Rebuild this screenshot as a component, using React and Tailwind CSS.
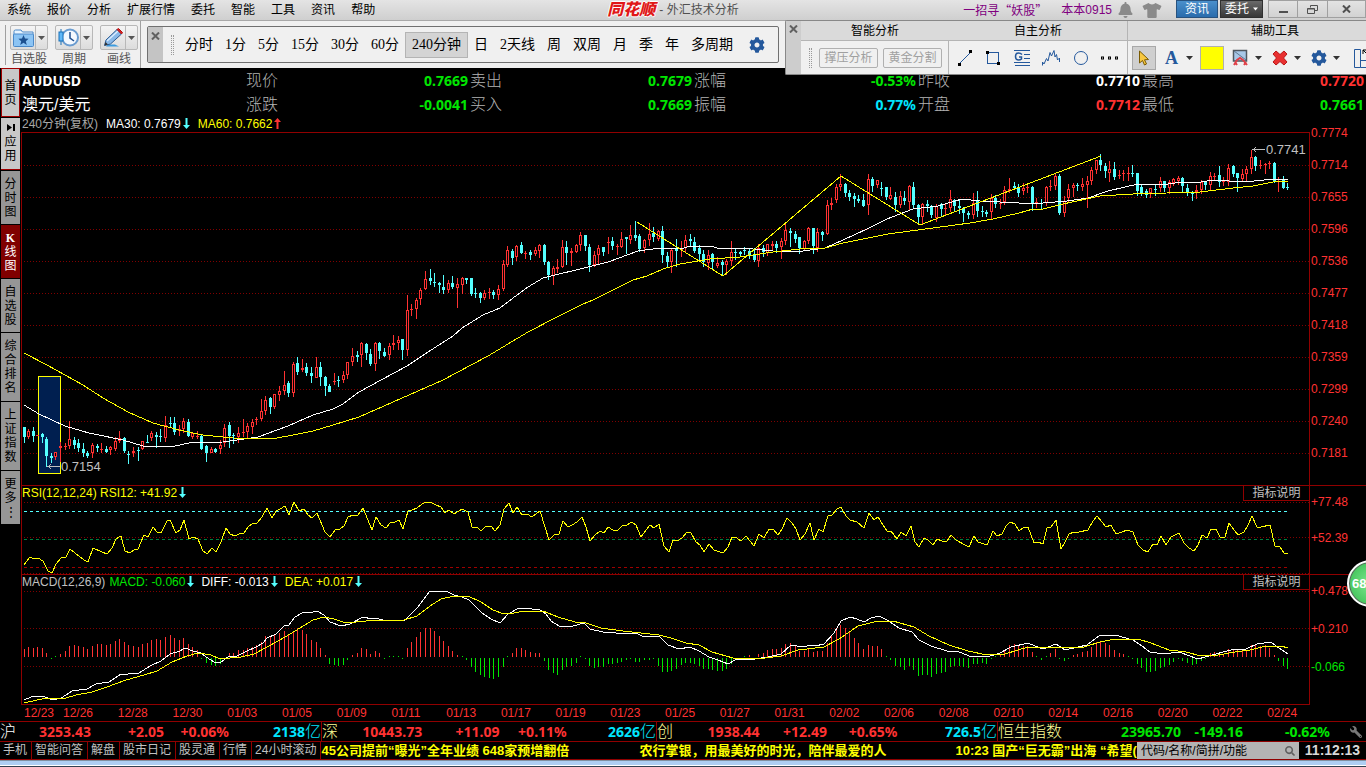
import { FaBell, FaCog, FaSearch, FaTshirt, FaWrench } from 'react-icons/fa';
import clsx from 'clsx';

const MENU = ['系统', '报价', '分析', '扩展行情', '委托', '智能', '工具', '资讯', '帮助'];

const PERIODS = ['分时', '1分', '5分', '15分', '30分', '60分', '240分钟', '日', '2天线', '周', '双周', '月', '季', '年', '多周期'];

const QUOTES = [
  [
    { label: '现价', value: '0.7669', color: 'text-[#00e600]' },
    { label: '卖出', value: '0.7679', color: 'text-[#00e600]' },
    { label: '涨幅', value: '-0.53%', color: 'text-[#00e600]' },
    { label: '昨收', value: '0.7710', color: 'text-white' },
    { label: '最高', value: '0.7720', color: 'text-[#ff3232]' },
  ],
  [
    { label: '涨跌', value: '-0.0041', color: 'text-[#00e600]' },
    { label: '买入', value: '0.7669', color: 'text-[#00e600]' },
    { label: '振幅', value: '0.77%', color: 'text-[#00e6ff]' },
    { label: '开盘', value: '0.7712', color: 'text-[#ff3232]' },
    { label: '最低', value: '0.7661', color: 'text-[#00e600]' },
  ],
];

const PRICES = ['0.7774', '0.7714', '0.7655', '0.7596', '0.7536', '0.7477', '0.7418', '0.7359', '0.7299', '0.7240', '0.7181'];
const GRID = [165, 197, 229, 261, 293, 325, 357, 389, 421, 453];

const DATES = [
  '12/26', '12/28', '12/30', '01/03', '01/05', '01/09', '01/11', '01/13', '01/17', '01/19', '01/23', '01/25',
  '01/27', '01/31', '02/02', '02/06', '02/08', '02/10', '02/14', '02/16', '02/20', '02/22', '02/24',
];

// [high, body top, body bottom, low, rising]
const CANDLES = [
  [427,427,437,443,0],[429,431,437,439,1],[427,431,436,442,0],[435,435,436,436,1],[433,434,437,443,0],[437,439,456,467,0],
  [453,456,458,463,0],[452,452,457,460,1],[442,446,448,462,1],[443,446,447,450,1],[421,439,446,449,1],[437,440,445,449,0],
  [439,443,448,452,0],[443,449,453,457,0],[451,453,456,458,0],[443,445,453,458,1],[444,446,448,452,0],[443,449,450,453,1],
  [446,449,452,453,0],[446,447,450,455,1],[437,441,449,451,1],[431,438,441,443,1],[437,438,451,453,0],[451,454,455,464,0],
  [447,451,453,457,1],[447,450,451,461,0],[441,441,449,450,1],[435,442,443,443,0],[431,433,438,441,1],[432,435,437,448,0],
  [429,436,437,442,0],[416,425,438,442,1],[417,423,424,428,0],[417,423,432,435,0],[425,429,431,436,1],[418,421,429,433,1],
  [419,422,436,437,0],[432,433,437,439,1],[431,436,437,439,1],[434,436,449,450,0],[445,446,453,462,0],[447,449,453,453,1],
  [448,449,452,453,0],[440,445,449,454,1],[424,428,443,447,1],[422,425,436,448,0],[433,435,436,444,0],[427,433,437,443,1],
  [419,432,433,437,1],[423,426,432,438,1],[419,422,427,434,1],[417,419,420,425,1],[399,411,419,421,1],[396,400,411,415,1],
  [397,398,407,414,0],[394,394,407,409,1],[386,391,395,401,1],[371,385,391,395,1],[381,383,393,397,0],[362,364,393,397,1],
  [357,363,372,375,0],[359,368,370,372,1],[363,367,373,376,0],[367,373,376,383,0],[357,367,378,378,1],[362,367,377,386,0],
  [376,377,386,396,0],[384,386,392,392,0],[373,381,382,385,1],[376,380,381,387,0],[371,375,380,383,1],[362,362,375,379,1],
  [348,356,362,366,1],[351,355,357,362,0],[342,343,355,367,1],[343,344,353,360,0],[349,354,364,366,0],[342,343,364,371,1],
  [342,343,351,359,0],[348,352,356,357,0],[343,346,355,360,1],[335,343,345,350,1],[336,340,343,350,1],[339,339,350,360,0],
  [295,310,350,356,1],[304,309,310,316,1],[298,300,309,319,1],[288,290,299,305,1],[271,279,289,290,1],[269,278,281,285,0],
  [273,282,283,287,0],[282,283,285,293,0],[275,287,290,294,0],[280,283,290,293,1],[276,283,287,289,0],[278,284,288,308,1],
  [277,278,285,294,1],[278,278,280,284,0],[278,278,294,296,0],[288,293,294,298,0],[292,293,298,303,0],[290,293,298,300,1],
  [288,292,293,299,1],[290,292,295,299,0],[285,289,295,300,1],[260,264,289,291,1],[246,250,265,267,1],[249,251,258,265,0],
  [245,246,257,261,1],[242,245,253,254,0],[251,253,254,259,1],[250,252,255,260,0],[247,250,254,256,1],[244,245,251,258,1],
  [244,245,262,265,0],[261,262,275,280,0],[266,268,276,285,1],[259,267,269,273,1],[240,247,267,268,1],[241,247,253,265,0],
  [248,251,253,266,1],[244,245,252,253,1],[232,235,245,251,1],[235,235,246,251,0],[244,247,265,272,0],[251,255,265,267,1],
  [245,248,255,264,1],[247,247,252,256,0],[237,242,243,254,1],[237,241,246,250,0],[244,246,247,255,1],[232,239,247,248,1],
  [237,237,239,254,0],[225,235,240,244,1],[221,235,238,241,0],[234,236,249,252,0],[239,240,248,253,1],[223,234,240,246,1],
  [227,233,237,242,0],[230,231,239,241,1],[226,231,255,263,0],[252,256,262,267,0],[249,250,262,273,1],[239,249,251,267,0],
  [241,249,250,257,1],[235,240,248,252,1],[234,239,241,246,0],[237,242,251,253,0],[245,248,254,260,0],[250,254,262,267,0],
  [250,255,263,270,1],[253,254,262,269,0],[257,263,266,268,1],[260,262,265,275,0],[259,261,265,275,1],[241,252,261,266,1],
  [248,252,253,260,0],[251,252,254,256,0],[247,250,251,255,0],[248,251,256,259,0],[248,254,260,262,0],[244,248,261,267,1],
  [245,248,252,257,0],[244,244,253,256,1],[241,244,246,251,1],[241,244,248,253,0],[238,241,247,259,1],[223,230,241,245,1],
  [228,231,233,247,0],[231,234,239,243,0],[237,237,248,254,0],[240,241,249,251,1],[227,228,241,244,1],[228,228,246,254,0],
  [228,232,248,252,1],[231,232,235,241,0],[200,205,234,235,1],[198,203,205,210,1],[184,187,200,203,1],[174,184,187,191,1],
  [183,184,193,197,0],[190,193,197,201,0],[193,196,199,207,0],[195,199,201,203,0],[194,200,206,207,0],[174,179,205,215,1],
  [177,179,186,192,0],[180,180,185,188,1],[182,188,189,196,0],[187,187,197,200,0],[187,195,199,200,1],[192,197,205,212,0],
  [191,196,205,208,1],[191,198,201,205,0],[185,186,202,211,1],[182,187,205,208,0],[204,205,217,224,0],[203,204,217,224,1],
  [200,204,206,212,0],[205,206,215,218,0],[204,206,218,222,1],[203,204,209,216,0],[203,208,209,215,1],[190,199,208,212,1],
  [199,200,206,212,0],[200,206,208,214,0],[207,208,213,222,0],[211,213,215,219,0],[193,203,215,219,1],[191,201,211,217,0],
  [206,211,212,217,0],[210,212,214,217,0],[194,198,212,219,1],[195,198,204,208,0],[199,203,204,209,1],[186,190,202,205,1],
  [178,189,191,193,1],[182,186,188,190,0],[184,188,193,197,0],[183,188,191,195,1],[183,187,188,193,1],[186,187,204,211,0],
  [198,202,203,208,1],[199,203,204,210,0],[186,187,203,206,1],[180,186,187,191,1],[174,176,186,190,1],[174,176,213,215,0],
  [196,201,213,217,1],[184,189,198,202,1],[183,185,188,197,1],[183,185,186,191,0],[178,184,187,191,1],[176,181,185,208,1],
  [167,170,181,185,1],[160,160,170,174,1],[154,160,165,171,0],[163,166,171,178,0],[161,169,173,182,1],[162,169,177,180,0],
  [170,175,176,179,1],[170,173,174,181,1],[167,173,174,181,1],[165,173,174,177,0],[173,173,191,196,0],[185,187,194,196,0],
  [189,191,195,198,0],[188,188,193,198,1],[184,189,190,196,0],[177,181,188,192,1],[181,181,188,192,0],[180,182,188,194,1],
  [178,179,183,186,1],[176,178,181,185,1],[177,178,186,193,0],[184,188,192,196,0],[191,192,194,201,0],[185,190,192,199,1],
  [180,182,190,194,1],[181,181,185,190,0],[172,176,185,190,1],[173,176,177,180,1],[166,175,182,187,0],[177,181,182,186,1],
  [164,168,182,186,1],[165,166,174,177,0],[173,173,178,192,0],[169,174,179,181,1],[166,169,174,181,1],[150,157,169,174,1],
  [156,157,166,171,0],[160,165,166,169,1],[163,164,165,174,1],[161,163,164,169,1],[162,163,181,183,0],[177,181,182,192,1],
  [176,180,188,189,0],[183,187,188,190,0],
];

const MA30 =
  '24,405 39,414 65,426 89,433 123,440 143,446 175,446 189,443 223,442 258,437 288,426 313,415 333,409 343,404 359,392 381,380 407,366 428,352 453,336 462,328 483,315 500,308 513,298 528,287 543,278 555,275 580,269 608,262 638,251 660,248 680,249 691,246 711,246 717,248 743,248 773,251 803,251 825,248 843,240 867,229 887,219 913,209 938,206 962,199 980,201 1019,203 1043,203 1067,201 1088,198 1108,191 1138,184 1168,184 1182,182 1195,183 1213,180 1245,182 1273,179 1288,180';

const MA60 =
  '24,353 47,365 83,385 103,398 128,412 153,423 179,430 203,435 233,438 271,439 288,436 313,431 333,425 359,417 443,380 488,356 528,332 557,317 583,304 593,300 617,288 633,280 647,276 663,269 680,264 710,259 740,257 773,252 800,249 825,248 843,243 888,234 918,230 970,223 993,219 1019,213 1033,209 1043,209 1063,204 1100,196 1133,194 1167,193 1200,192 1233,188 1253,186 1273,182 1288,181';

const RSI =
  '24,565 30,557 34,559 38,558 43,561 48,571 52,573 56,564 61,558 66,557 70,549 75,553 84,560 88,562 93,548 102,552 107,554 112,548 116,539 121,536 125,551 130,553 134,550 138,549 144,535 148,537 153,527 157,532 161,533 167,521 170,520 176,533 180,530 184,520 189,539 193,537 198,539 203,551 207,554 212,548 216,552 221,542 226,528 230,534 235,536 239,534 244,533 248,527 253,523 257,523 262,517 267,508 272,518 276,511 280,509 285,506 289,515 294,502 299,511 304,509 308,515 312,518 317,513 325,532 330,537 335,530 340,529 344,526 348,517 353,515 358,515 363,508 372,530 376,517 381,525 386,528 390,523 395,522 399,520 403,529 408,511 412,510 417,508 422,504 426,502 432,503 436,505 441,507 445,513 449,510 454,514 462,509 468,512 472,527 477,527 481,531 485,527 491,526 495,531 500,525 504,509 509,503 513,513 517,507 522,515 527,514 532,517 540,511 545,527 549,540 554,535 559,534 563,521 568,527 572,525 577,522 582,517 586,527 590,541 595,535 600,531 604,533 608,527 613,530 618,530 623,525 627,525 632,522 636,525 641,537 646,530 650,525 654,528 659,524 664,546 669,552 673,540 677,541 682,538 687,532 691,533 696,542 700,545 704,552 709,544 714,550 723,553 728,547 732,537 737,538 741,541 746,536 750,541 754,546 759,534 764,538 769,529 773,529 778,535 782,529 787,518 792,523 796,529 800,540 805,534 810,523 814,540 819,529 823,532 828,516 832,515 837,509 841,507 846,516 850,520 857,522 864,528 869,513 874,520 878,517 883,525 887,531 891,531 897,539 901,532 906,536 911,526 915,542 919,547 924,538 928,540 933,545 937,539 942,541 947,541 951,535 956,540 965,545 969,547 974,536 978,542 987,545 993,531 997,536 1002,534 1006,526 1010,522 1015,524 1019,531 1024,527 1028,527 1034,543 1038,542 1043,544 1047,528 1051,527 1056,520 1061,549 1065,542 1069,534 1074,532 1079,532 1088,530 1093,521 1097,516 1102,522 1106,527 1111,525 1116,534 1122,532 1127,530 1133,532 1138,545 1143,550 1148,552 1153,544 1157,545 1161,536 1166,545 1171,537 1175,535 1179,533 1184,543 1189,548 1194,551 1198,545 1202,535 1207,538 1211,529 1216,529 1220,537 1225,537 1229,523 1235,531 1238,535 1244,532 1248,525 1252,516 1257,527 1261,527 1270,525 1275,546 1280,547 1284,553 1288,554';

const DIFF =
  '24,700 31,697 43,696 52,700 61,698 66,695 72,691 87,689 96,684 109,682 121,674 128,674 139,673 150,666 161,661 170,654 180,651 185,648 193,651 201,653 209,659 216,663 221,662 228,657 237,656 245,652 256,647 263,643 267,638 276,634 284,626 289,625 295,617 304,612 313,612 317,611 324,615 330,622 341,626 350,624 363,617 372,619 376,618 386,621 399,620 404,621 417,608 430,591 446,591 454,595 462,597 469,600 482,613 491,619 500,623 508,614 519,608 532,609 540,610 546,614 551,621 559,626 573,626 584,623 590,629 603,632 616,633 636,633 642,636 659,636 668,645 679,649 690,647 699,651 709,657 718,660 728,664 735,660 755,659 768,657 781,654 791,645 803,647 811,645 815,646 824,644 834,633 841,621 850,617 857,619 864,622 871,618 879,616 887,620 899,628 912,632 919,640 931,646 947,651 957,651 969,656 987,657 1000,653 1011,647 1028,643 1035,646 1043,649 1056,644 1065,650 1087,645 1100,635 1115,635 1133,640 1142,646 1150,652 1164,654 1179,652 1198,659 1212,655 1231,650 1246,649 1257,644 1271,642 1279,648 1288,654';

const DEA =
  '24,703 46,698 66,698 76,695 92,692 107,687 126,680 144,675 157,671 172,662 187,656 198,653 211,655 220,659 241,657 254,654 269,646 285,637 300,628 313,620 324,617 334,619 343,622 356,622 376,620 404,620 417,616 430,606 441,599 454,596 468,596 481,602 493,610 504,614 514,613 525,611 543,611 558,617 575,622 586,623 601,628 623,631 659,635 671,638 686,643 699,645 712,652 733,658 765,658 781,656 798,650 824,647 839,639 858,626 878,621 893,621 914,627 929,636 949,645 968,651 987,655 1005,654 1028,647 1056,647 1084,647 1100,642 1115,639 1138,639 1151,643 1169,650 1186,652 1201,656 1218,655 1235,652 1250,650 1266,646 1281,646 1288,648';

const MACD_BARS = [
  8,10,9,10,9,4,-1,1,3,6,11,12,11,10,8,11,13,13,12,13,16,18,15,12,11,10,13,14,17,18,17,20,22,19,17,19,13,10,7,-1,
  -5,-7,-8,-6,-1,4,4,7,7,9,10,12,15,21,20,23,24,26,22,26,29,27,23,17,15,9,2,-6,-7,-8,-7,-2,2,4,9,8,3,6,4,-1,
  1,1,1,-1,9,15,20,25,29,29,26,21,16,11,6,2,1,-2,-9,-14,-17,-19,-20,-21,-19,-9,1,4,9,9,7,5,4,4,-3,-12,-15,-17,-12,-9,
  -8,-5,1,-1,-8,-10,-9,-9,-6,-6,-5,-4,-2,-1,-4,-4,-2,-2,-1,-8,-14,-14,-13,-11,-7,-5,-5,-6,-8,-11,-11,-12,-13,-13,-11,-6,-2,-1,1,2,
  -1,3,4,7,8,8,9,13,14,12,6,6,8,5,6,6,14,21,29,32,29,25,19,14,8,12,11,11,8,1,-2,-8,-9,-12,-8,-12,-18,-17,-17,-19,
  -16,-15,-14,-9,-8,-8,-9,-10,-6,-6,-5,-6,-1,1,3,6,12,13,12,11,11,5,1,-2,1,4,8,-1,-3,-1,2,3,5,6,10,15,15,14,12,7,
  4,3,1,-1,-6,-10,-14,-14,-13,-10,-9,-7,-4,-1,-3,-5,-7,-6,-3,-1,4,5,3,3,8,7,7,6,6,12,12,11,12,9,2,-3,-8,-11,
];

const SIDE = [
  { text: '首页', look: 'h-[49px] bg-[#c8c8c8] border border-[#a00000]' },
  { text: '应用', look: 'h-[52px] bg-[#c8c8c8] border-b border-[#a00000]', play: true },
  { text: '分时图', look: 'h-[53px] bg-[#969696]' },
  { text: 'K线图', look: 'h-[53px] bg-[#800000] text-white' },
  { text: '自选股', look: 'h-[53px] bg-[#969696]' },
  { text: '综合排名', look: 'h-[68px] bg-[#969696]' },
  { text: '上证指数', look: 'h-[68px] bg-[#969696]' },
  { text: '更多⋮', look: 'h-[53px] bg-[#969696]' },
];

const INDEXES = [
  { name: '沪', cols: 'grid-cols-[91fr_73fr_65fr_92fr]', nameColor: 'text-white', color: 'text-[#ff3232]', price: '3253.43', diff: '+2.05', pct: '+0.06%', vol: '2138' },
  { name: '深', cols: 'grid-cols-[100fr_77fr_67fr_89fr]', nameColor: 'text-[#ffff96]', color: 'text-[#ff3232]', price: '10443.73', diff: '+11.09', pct: '+0.11%', vol: '2626' },
  { name: '创', cols: 'grid-cols-[102fr_67fr_70fr_99fr]', nameColor: 'text-[#ffff96]', color: 'text-[#ff3232]', price: '1938.44', diff: '+12.49', pct: '+0.65%', vol: '726.5' },
  { name: '恒生指数', cols: 'grid-cols-[183fr_62fr_87fr_36fr]', nameColor: 'text-[#ffff96]', color: 'text-[#00e600]', price: '23965.70', diff: '-149.16', pct: '-0.62%' },
];

const LINKS = ['手机', '智能问答', '解盘', '股市日记', '股灵通', '行情', '24小时滚动'];

const barX = (i) => Math.floor(24 + i * 4.5625);

function Arrow({ up }) {
  return (
    <svg viewBox="0 0 7 11" className={clsx('inline-block w-[7px] h-[11px] ml-[2px] align-[-1px]', up ? 'text-[#ff3232]' : 'text-[#54ffff]')} fill="currentColor">
      <path d={up ? 'M3.5 0 L7 4 H4.5 V11 H2.5 V4 H0Z' : 'M3.5 11 L7 7 H4.5 V0 H2.5 V7 H0Z'} />
    </svg>
  );
}

function Caret({ className }) {
  return (
    <svg viewBox="0 0 7 4" className={clsx('h-1 shrink-0', className || 'w-[7px]')} fill="currentColor">
      <path d="M0 0H7L3.5 4Z" />
    </svg>
  );
}

function Cross({ className }) {
  return (
    <svg viewBox="0 0 9 8" className={className} stroke="currentColor" strokeWidth="2" fill="none">
      <path d="M1 0.5 L8 7.5 M8 0.5 L1 7.5" />
    </svg>
  );
}

function Handle() {
  return <span className="w-[3px] h-5 shrink-0 border-x border-dotted border-[#9a9a9a]" />;
}

function TitleBar() {
  return (
    <header className="h-[21px] shrink-0 grid grid-cols-[1fr_auto_1fr] border-b border-[#a8a8a8] bg-linear-to-b from-[#e4e4e4] to-[#cfcfcf] text-xs text-black">
      <nav className="flex items-center gap-4 pl-[7px] whitespace-nowrap">
        {MENU.map((m) => (
          <button key={m}>{m}</button>
        ))}
      </nav>
      <div className="flex items-center gap-1 pr-5 text-[#505050] whitespace-nowrap">
        <span className="text-base leading-5 font-black italic text-[#e01818] [text-shadow:1px_0_#fff,-1px_0_#fff,0_1px_#fff,0_-1px_#fff]">同花顺</span>
        <span>- 外汇技术分析</span>
      </div>
      <div className="flex items-center justify-end whitespace-nowrap">
        <a href="#tip" className="text-[#800080] mr-[14px] font-['Noto_Sans_CJK_SC',sans-serif]">一招寻“妖股”</a>
        <a href="#user" className="text-[#800080] mr-[6px]">本本0915</a>
        <FaBell className="w-[15px] h-4 text-[#8a8a8a] mr-[9px]" />
        <FaTshirt className="w-5 h-[15px] text-[#8a8a8a] mr-[14px]" />
        <button className="w-[42px] h-[18px] self-start border border-[#28527e] bg-linear-to-b from-[#4a90cc] to-[#2a6cac] text-white text-xs leading-4">资讯</button>
        <button className="w-[43px] h-[18px] ml-[2px] mr-[5px] self-start border border-[#303030] bg-linear-to-b from-[#6a6a6a] to-[#383838] text-white text-xs leading-4 flex items-center justify-center gap-1">
          委托
          <Caret className="w-[5px]" />
        </button>
        <button aria-label="最小化" className="w-[30px] h-[18px] self-start border border-[#a0a0a0] flex justify-center items-end pb-1">
          <span className="w-[9px] h-[2px] bg-[#505050]" />
        </button>
        <button aria-label="还原" className="w-[29px] h-[18px] self-start border-y border-[#a0a0a0] flex justify-center items-center">
          <svg viewBox="0 0 11 9" className="w-[11px] h-[9px]" fill="none" stroke="#505050">
            <path d="M3.5 2.5 V0.5 H10.5 V5.5 H8 M0.5 3.5 H7.5 V8.5 H0.5Z M0.5 4H7.5" />
          </svg>
        </button>
        <button aria-label="关闭" className="w-[39px] h-[18px] self-start border border-[#a0a0a0] flex justify-center items-center">
          <Cross className="w-[9px] h-2 text-[#505050]" />
        </button>
      </div>
    </header>
  );
}

function ToolButton({ label, children }) {
  return (
    <div className="w-[38px] flex flex-col items-center">
      <div className="w-full h-[25px] flex border border-[#b8b8b8] rounded-xs bg-linear-to-b from-[#f4f4f4] to-[#dcdcdc]">
        <button aria-label={label} className="w-[25px] flex items-center justify-center border-r border-[#b8b8b8]">{children}</button>
        <button aria-label={`${label}选项`} className="flex-1 flex items-center justify-center text-[#555]">
          <Caret />
        </button>
      </div>
      <span className="text-xs leading-[18px] text-[#555] whitespace-nowrap">{label}</span>
    </div>
  );
}

function Toolbar() {
  return (
    <div className="h-[47px] shrink-0 flex bg-[#f0f0f0] text-black">
      <div className="w-[141px] shrink-0 flex gap-[7px] pt-1 pl-1 border-r border-[#a0a0a0]">
        <span className="w-[2px] h-10 border-r border-[#a0a0a0] -mr-[3px]" />
        <ToolButton label="自选股">
          <svg viewBox="0 0 21 18" className="w-[21px] h-[18px]">
            <path d="M1 2.5 Q1 1 2.5 1 H8 L9.5 3 H20 V6 H1Z" fill="#e8f4ff" stroke="#4a88c8" />
            <rect x="0.5" y="5" width="20" height="12.5" rx="1" fill="#8cc4f4" stroke="#4a88c8" />
            <path d="M10.5 6 L12 9.6 15.6 9.8 12.8 12.2 13.8 16 10.5 13.8 7.2 16 8.2 12.2 5.4 9.8 9 9.6Z" fill="#1c5090" />
          </svg>
        </ToolButton>
        <ToolButton label="周期">
          <svg viewBox="0 0 21 19" className="w-[21px] h-[19px]">
            <circle cx="12" cy="9.5" r="8" fill="#f4f9ff" stroke="#6a9cd0" strokeWidth="2" />
            <path d="M12 4 V10 L16 13" stroke="#205090" strokeWidth="1.5" fill="none" />
            <rect x="1" y="4" width="4" height="9" fill="#60b8f8" stroke="#1870b8" />
            <path d="M3 1V4M3 13V17" stroke="#1870b8" />
          </svg>
        </ToolButton>
        <ToolButton label="画线">
          <svg viewBox="0 0 21 19" className="w-[21px] h-[19px]">
            <path d="M3 18.5H16L12 16.5H5Z" fill="#3c9ce0" />
            <path d="M1.5 17.5 L3 12 L14 1.5 L18.5 6 L7.5 16Z" fill="#88b8e8" stroke="#2c5c94" />
            <path d="M4 13 L15 3" stroke="#d8ecff" strokeWidth="1.5" />
            <path d="M14 1.5 L15.5 0.5 L19.5 4.5 L18.5 6Z" fill="#e02020" stroke="#b01010" />
            <path d="M1.5 17.5 L2.5 14 L5 16.5Z" fill="#333" />
          </svg>
        </ToolButton>
      </div>
      <div className="my-[5px] ml-[6px] w-[632px] shrink-0 flex items-center border border-[#707070] rounded-xs overflow-hidden">
        <button aria-label="关闭周期栏" className="w-[15px] self-stretch bg-[#c4c4c4] flex justify-center pt-[5px] text-[#606060]">
          <Cross className="w-[9px] h-2" />
        </button>
        <span className="w-2" />
        <Handle />
        <div className="flex items-center gap-3 pl-[11px] text-sm leading-5 whitespace-nowrap font-['Liberation_Serif','Noto_Sans_CJK_SC',serif]">
          {PERIODS.map((p) => (
            <button key={p} className={p === '240分钟' ? 'h-[26px] px-[6px] -mx-[6px] border border-[#b4b4b4] bg-[#d4d4d4]' : ''}>
              {p}
            </button>
          ))}
        </div>
        <FaCog className="w-4 h-4 ml-4 text-[#24589c]" />
      </div>
    </div>
  );
}

function DrawPanel() {
  return (
    <div className="absolute right-0 top-5 w-[581px] h-[55px] flex border-l border-y border-[#888] rounded-l-xs bg-[#f0f0f0] text-xs text-black overflow-hidden">
      <button aria-label="关闭画线栏" className="w-[15px] shrink-0 bg-[#cdcdcd] flex justify-center pt-1 text-[#606060]">
        <Cross className="w-[9px] h-2" />
      </button>
      <section className="w-[148px] shrink-0 flex flex-col border-r border-[#b4b4b4]">
        <h3 className="h-5 leading-5 text-center bg-[#dadada] border-b border-[#b4b4b4] -mr-px">智能分析</h3>
        <div className="flex-1 flex items-center gap-[5px] pl-2 text-[#a0a0a0]">
          <Handle />
          <button className="w-[59px] h-5 ml-[2px] border border-[#b0b0b0] rounded-xs">撑压分析</button>
          <button className="w-[59px] h-5 border border-[#b0b0b0] rounded-xs">黄金分割</button>
        </div>
      </section>
      <section className="w-[179px] shrink-0 flex flex-col border-r border-[#b4b4b4]">
        <h3 className="h-5 leading-5 text-center bg-[#dadada] border-b border-[#b4b4b4]">自主分析</h3>
        <div className="flex-1 flex items-center justify-between pl-2 pr-[9px] text-[#24589c]">
          <button aria-label="直线">
            <svg viewBox="0 0 16 16" className="w-4 h-4" stroke="#24589c"><path d="M2 14L14 2" /><path d="M1 13h3v3H1zM12 0h3v3h-3z" fill="#000" stroke="none" /></svg>
          </button>
          <button aria-label="矩形">
            <svg viewBox="0 0 16 16" className="w-4 h-4" fill="none" stroke="#24589c"><rect x="2.5" y="2.5" width="11" height="11" /><path d="M1 1h3v3H1zM12 12h3v3h-3z" fill="#000" stroke="none" /></svg>
          </button>
          <button aria-label="黄金分割线">
            <svg viewBox="0 0 16 16" className="w-4 h-4" fill="none" stroke="#24589c"><path d="M0 .5H16M10 4.5H16M10 8.5H16M0 12.5H16M1 15.5H16" /><path d="M8 4.5 Q6.5 3 4.5 3 Q1.5 3 1.5 6.5 Q1.5 10 4.5 10 Q6.5 10 7.5 9 V7 H5" strokeWidth="1.5" /></svg>
          </button>
          <button aria-label="波浪线">
            <svg viewBox="0 0 18 16" className="w-[18px] h-4" fill="none" stroke="#24589c"><path d="M0.5 15.5V12L2 14 4.5 8.5 6 11 8 2.5 9.5 6 12 .5 13 7 14.5 4.5 15.5 10 17.5 8V12" /></svg>
          </button>
          <button aria-label="圆">
            <svg viewBox="0 0 16 16" className="w-4 h-4" fill="none" stroke="#24589c"><circle cx="8" cy="8" r="6.5" /></svg>
          </button>
          <button aria-label="更多画线">
            <svg viewBox="0 0 17 4" className="w-[17px] h-1" fill="#000"><path d="M0 .5h3v3H0zM7 .5h3v3H7zM14 .5h3v3h-3z" /><path d="M1 1.5h1v1H1zM8 1.5h1v1H8zM15 1.5h1v1h-1z" fill="#f0f0f0" /></svg>
          </button>
        </div>
      </section>
      <section className="flex-1 flex flex-col">
        <h3 className="h-5 shrink-0 leading-5 pl-[123px] bg-[#dadada] border-b border-[#b4b4b4]">辅助工具</h3>
        <div className="flex-1 flex items-center pl-1 text-[#24589c] whitespace-nowrap">
          <button aria-label="选择" className="w-6 h-6 shrink-0 border border-[#a8a8a8] bg-[#cfcfcf] flex items-center justify-center">
            <svg viewBox="0 0 12 16" className="w-3 h-4"><path d="M1.5 1 V13 L4.5 10.5 L6.5 15 L8.5 14 L6.5 9.8 L10.5 9.5Z" fill="#f8c840" stroke="#7a5a00" /></svg>
          </button>
          <button aria-label="文字" className="w-[37px] shrink-0 flex items-center justify-end gap-2 font-bold text-lg leading-6 font-['Liberation_Serif',serif]">
            A
            <Caret className="w-[7px] text-[#333]" />
          </button>
          <button aria-label="颜色" className="w-6 h-6 ml-[7px] shrink-0 border border-[#b0b0b0] bg-[#ffff00]" />
          <button aria-label="隐藏画线" className="ml-2 flex items-center gap-[6px] shrink-0">
            <svg viewBox="0 0 17 17" className="w-[17px] h-[17px]"><path d="M1.5 1.5H14.5V12H1.5Z" fill="#a8c8e8" stroke="#505860" strokeWidth="1.5" /><path d="M2 2L14 11" stroke="#607890" /><path d="M2 16 L5 11 L8 9 L11 11 L15 16 M5 16 L3 13 M12 16 L14 13" stroke="#e04048" strokeWidth="2" fill="none" /></svg>
            <Caret className="w-[7px] text-[#333]" />
          </button>
          <button aria-label="删除画线" className="ml-[10px] flex items-center gap-[6px] shrink-0">
            <svg viewBox="0 0 16 16" className="w-4 h-4"><path d="M4 1 L8 4.5 L12 1 L15 4 L11.5 8 L15 12 L12 15 L8 11.5 L4 15 L1 12 L4.5 8 L1 4Z" fill="#e83030" stroke="#b81818" /></svg>
            <Caret className="w-[7px] text-[#333]" />
          </button>
          <button aria-label="设置" className="ml-[10px] flex items-center gap-[6px] shrink-0">
            <FaCog className="w-4 h-4" />
            <Caret className="w-[7px] text-[#333]" />
          </button>
          <svg viewBox="0 0 14 20" className="w-[14px] h-5 ml-[14px] shrink-0" fill="none" stroke="#24589c"><path d="M.5 1.5H6.5V19.5H.5ZM6.5 12.5H14M6.5 19.5H14" /><path d="M9 6V2H13M9 2L14 7" stroke="#000" /></svg>
        </div>
      </section>
    </div>
  );
}

function Sidebar() {
  return (
    <nav className="w-[21px] shrink-0 pl-px pr-px flex flex-col gap-px bg-black text-xs leading-[14px] text-black">
      {SIDE.map((s) => (
        <button key={s.text} className={clsx('w-full flex flex-col items-center justify-center overflow-hidden shrink-0', s.look)}>
          {s.play && (
            <svg viewBox="0 0 8 7" className="w-2 h-[7px] mb-1" fill="#000"><path d="M0 0L5 3.5L0 7ZM6 0H8V7H6Z" /></svg>
          )}
          {[...s.text].map((ch, i) => (
            <span key={i} className={ch === 'K' ? "font-bold font-['Liberation_Serif',serif]" : ''}>{ch}</span>
          ))}
        </button>
      ))}
    </nav>
  );
}

function Quote() {
  return (
    <div className="pt-px pl-px">
      {QUOTES.map((row, r) => (
        <div key={r} className="grid grid-cols-6 h-6 items-center text-base leading-6">
          <span className={clsx('text-white', r === 0 && "font-bold text-sm leading-6 font-['Noto_Sans',sans-serif]")}>{r === 0 ? 'AUDUSD' : '澳元/美元'}</span>
          {row.map((q) => (
            <span key={q.label} className="flex justify-between items-center pr-[2px]">
              <span className="text-[#b4b4b4] font-light">{q.label}</span>
              <b className={clsx("text-sm leading-6 font-['Noto_Sans',sans-serif]", q.color)}>{q.value}</b>
            </span>
          ))}
        </div>
      ))}
      <div className="h-[15px] flex gap-2 text-xs leading-[15px] text-[#a8a8a8] whitespace-nowrap">
        <span>240分钟(复权)</span>
        <span className="text-white">MA30: 0.7679<Arrow /></span>
        <span className="text-[#ffff00]">MA60: 0.7662<Arrow up /></span>
      </div>
    </div>
  );
}

function Dots({ ys }) {
  return ys.map((y) => <path key={y} d={`M24 ${y}.5H1309`} stroke="#800000" strokeDasharray="1 2" />);
}

function PricePanel() {
  return (
    <section className="flex-1 min-h-0 flex">
      <div className="flex-1 min-w-0 border-t border-x border-[#900000]">
        <svg viewBox="22 133 1287 352" preserveAspectRatio="none" className="block w-full h-full" shapeRendering="crispEdges" fill="none">
          <Dots ys={GRID} />
          <rect x="38.5" y="376.5" width="22" height="97" fill="#001f50" stroke="#ffff00" />
          {CANDLES.map(([hi, top, bot, low, up], i) => {
            const x = barX(i);
            const color = up ? '#ff3232' : '#54ffff';
            const hollow = up && bot - top > 2;
            return (
              <g key={i} fill={color}>
                <rect x={x} y={hi} width="1" height={low - hi} />
                <rect x={x - 1} y={top} width="3" height={Math.max(bot - top, 1)} />
                {hollow && <rect x={x} y={top + 1} width="1" height={bot - top - 2} fill="#000" />}
              </g>
            );
          })}
          <polyline points={MA30} stroke="#fff" />
          <polyline points={MA60} stroke="#ffff00" />
          <polyline points="637,222 723,276 841,176 920,225 1101,156" stroke="#ffff00" />
          <g stroke="#c0c0c0">
            <path d="M48 466.5H60M51 464.5L48 466.5L51 468.5" />
            <path d="M1253 149.5H1265M1256 147.5L1253 149.5L1256 151.5" />
          </g>
          <g fill="#c0c0c0" fontSize="13">
            <text x="61" y="471">0.7154</text>
            <text x="1266" y="154">0.7741</text>
          </g>
        </svg>
      </div>
      <div className="w-14 shrink-0 -mt-[15px] pl-px text-[#ff3232]">
        {PRICES.map((p) => (
          <div key={p} className="h-8 leading-8">{p}</div>
        ))}
      </div>
    </section>
  );
}

function Indicator({ title, labels, gap, children, className }) {
  return (
    <section className={clsx('shrink-0 flex', className)}>
      <div className="flex-1 min-w-0 flex flex-col border-x border-[#900000]">
        <div className="h-[15px] shrink-0 flex justify-between leading-[15px] whitespace-nowrap">
          <div className="flex">{title}</div>
          <button className="w-[66px] border-l border-b border-[#900000] text-[#c0c0c0] leading-[14px]">指标说明</button>
        </div>
        {children}
      </div>
      <div className={clsx('w-14 shrink-0 flex flex-col pt-2 pl-px leading-4 text-[#ff3232]', gap)}>{labels}</div>
    </section>
  );
}

function RsiPanel() {
  return (
    <Indicator
      className="border-t border-[#900000] h-[89px]"
      gap="gap-5"
      title={<span className="text-[#ffff00]">RSI(12,12,24) RSI12: +41.92<Arrow /></span>}
      labels={<><span>+77.48</span><span>+52.39</span></>}
    >
      <svg viewBox="22 501 1287 73" preserveAspectRatio="none" className="w-full flex-1 min-h-0" shapeRendering="crispEdges" fill="none">
        <Dots ys={[502, 537, 573]} />
        <path d="M24 511.5H1288" stroke="#54ffff" strokeDasharray="3 3" />
        <path d="M24 539.5H1288" stroke="#008040" strokeDasharray="3 3" />
        <path d="M24 567.5H1288" stroke="#a00000" strokeDasharray="3 3" />
        <polyline points={RSI} stroke="#ffff00" />
      </svg>
    </Indicator>
  );
}

function MacdPanel() {
  return (
    <Indicator
      className="border-t border-[#900000] h-[131px]"
      gap="gap-[22px]"
      title={
        <>
          <span className="text-[#c0c0c0] mr-1">MACD(12,26,9)</span>
          <span className="text-[#00e600] mr-[7px]">MACD: -0.060<Arrow /></span>
          <span className="text-white mr-[7px]">DIFF: -0.013<Arrow /></span>
          <span className="text-[#ffff00]">DEA: +0.017<Arrow /></span>
        </>
      }
      labels={<><span>+0.478</span><span>+0.210</span><span className="text-[#00e600]">-0.066</span></>}
    >
      <svg viewBox="22 590 1287 114" preserveAspectRatio="none" className="w-full flex-1 min-h-0" shapeRendering="crispEdges" fill="none">
        <Dots ys={[591, 628, 666]} />
        {MACD_BARS.map((v, i) => (
          <rect key={i} x={barX(i)} y={v > 0 ? 657 - v : 658} width="1" height={Math.abs(v)} fill={v > 1 ? '#ff3232' : '#00e600'} />
        ))}
        <polyline points={DIFF} stroke="#fff" />
        <polyline points={DEA} stroke="#ffff00" />
      </svg>
      <div className="h-px shrink-0 bg-[#900000]" />
    </Indicator>
  );
}

function IndexBar() {
  return (
    <div className="h-5 shrink-0 grid grid-cols-[322fr_335fr_341fr_368fr] border-t border-[#900000] text-sm leading-[19px] font-bold font-['Noto_Sans','Noto_Sans_CJK_SC',sans-serif]">
      {INDEXES.map((x, i) => (
        <div key={x.name} className={clsx('grid text-right whitespace-nowrap', x.cols, i < 3 && 'border-r border-[#900000]', x.color)}>
          <span className="flex justify-between">
            <span className={clsx('text-base leading-[19px] font-light', x.nameColor)}>{x.name}</span>
            {x.price}
          </span>
          <span>{x.diff}</span>
          <span>{x.pct}</span>
          {x.vol ? (
            <span className="text-[#00e6ff]">{x.vol}<span className="text-base leading-[19px] font-light">亿</span></span>
          ) : (
            <FaWrench className="w-3 h-3 mt-1 mr-1 justify-self-end text-[#787878] -scale-x-100" />
          )}
        </div>
      ))}
    </div>
  );
}

function NewsBar() {
  return (
    <footer className="h-[19px] shrink-0 flex border-y border-[#900000] text-xs leading-[17px] whitespace-nowrap">
      {LINKS.map((l) => (
        <a key={l} href="#news" className="shrink-0 pl-[3px] pr-1 border-r border-[#900000] text-[#c0c0c0]">{l}</a>
      ))}
      <div className="flex-1 min-w-0 flex overflow-hidden text-[13px] leading-[17px] font-bold text-[#ffff00]">
        <span className="w-[318px] shrink-0">45公司提前“曝光”全年业绩 648家预增翻倍</span>
        <span className="w-[316px] shrink-0">农行掌银，用最美好的时光，陪伴最爱的人</span>
        <span className="shrink-0">10:23 国产“巨无霸”出海 “希望(</span>
      </div>
      <label className="w-[162px] shrink-0 flex items-center bg-[#b4b4b4] text-black px-1">
        <input aria-label="搜索" placeholder="代码/名称/简拼/功能" className="flex-1 min-w-0 bg-transparent outline-none text-xs placeholder:text-black" />
        <FaSearch className="w-[10px] h-[10px] text-[#606060]" />
      </label>
      <time className="w-[67px] shrink-0 text-center text-sm leading-[17px] font-bold text-[#d8d8d8]">11:12:13</time>
    </footer>
  );
}

export default function App() {
  return (
    <div className="relative h-screen flex flex-col overflow-hidden bg-black font-['Liberation_Sans','Noto_Sans_CJK_SC',sans-serif]">
      <TitleBar />
      <Toolbar />
      <main className="flex-1 min-h-0 flex">
        <Sidebar />
        <div className="flex-1 min-w-0 flex flex-col text-xs">
          <Quote />
          <PricePanel />
          <RsiPanel />
          <MacdPanel />
          <div className="h-4 shrink-0 flex pl-[3px] pr-11 leading-4 text-[#ff3232]">
            <span className="w-[39px] shrink-0">12/23</span>
            {DATES.map((d) => (
              <span key={d} className="flex-1">{d}</span>
            ))}
          </div>
        </div>
      </main>
      <IndexBar />
      <NewsBar />
      <div className="h-[7px] shrink-0 flex flex-col border-t border-t-[#8090a0] border-b border-b-[#304050] bg-[#aecef2]">
        <span className="mt-auto h-px bg-white" />
      </div>
      <DrawPanel />
      <button className="absolute -right-7 bottom-40 w-[47px] h-[47px] rounded-full border-2 border-white ring-1 ring-[#606060] ring-inset bg-radial from-[#7ce890] to-[#28b848] pl-[3px] text-left text-[13px] font-bold text-white">
        68
      </button>
    </div>
  );
}
